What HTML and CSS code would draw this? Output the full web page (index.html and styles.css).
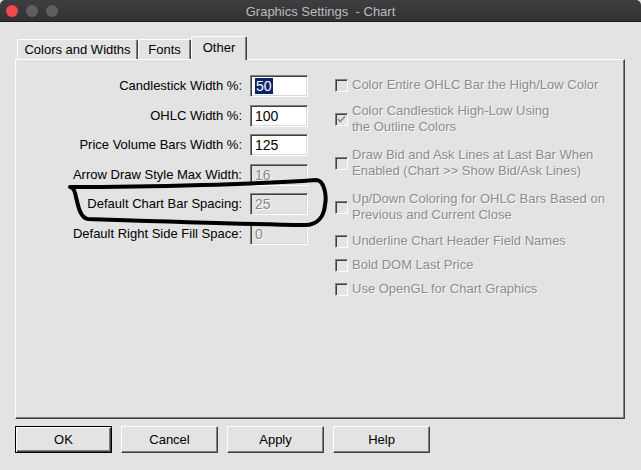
FILE: index.html
```html
<!DOCTYPE html>
<html lang="en">
<head>
    <meta charset="UTF-8">
    <meta name="viewport" content="width=device-width, initial-scale=1.0">
    <title>Graphics Settings - Chart</title>
    <link rel="stylesheet" href="styles.css">
</head>
<body>
<div class="window">
    <div class="titlebar">
        <div class="lights">
            <span class="light close"></span>
            <span class="light"></span>
            <span class="light"></span>
        </div>
        <div class="title">Graphics Settings &nbsp;- Chart</div>
    </div>

    <div class="main">
        <div class="tabs">
            <div class="tab tab-colors">Colors and Widths</div>
            <div class="tab tab-fonts">Fonts</div>
            <div class="tab tab-other active">Other</div>
        </div>

        <div class="panel">
            <div class="fields">
                <label>Candlestick Width %:</label>
                <div class="input"><span class="sel">50</span></div>

                <label>OHLC Width %:</label>
                <div class="input">100</div>

                <label>Price Volume Bars Width %:</label>
                <div class="input">125</div>

                <label>Arrow Draw Style Max Width:</label>
                <div class="input disabled">16</div>

                <label>Default Chart Bar Spacing:</label>
                <div class="input disabled">25</div>

                <label>Default Right Side Fill Space:</label>
                <div class="input disabled">0</div>
            </div>

            <div class="checks">
                <div class="check">
                    <span class="box"></span>
                    <span class="text">Color Entire OHLC Bar the High/Low Color</span>
                </div>
                <div class="check double">
                    <span class="box">
                        <svg width="11" height="11" viewBox="0 0 11 11"><path d="M2 5 L4 7.5 L9 2.5" fill="none" stroke="#8a8a8a" stroke-width="1.6"/></svg>
                    </span>
                    <span class="text">Color Candlestick High-Low Using<br>the Outline Colors</span>
                </div>
                <div class="check double">
                    <span class="box"></span>
                    <span class="text">Draw Bid and Ask Lines at Last Bar When<br>Enabled (Chart &gt;&gt; Show Bid/Ask Lines)</span>
                </div>
                <div class="check double">
                    <span class="box"></span>
                    <span class="text">Up/Down Coloring for OHLC Bars Based on<br>Previous and Current Close</span>
                </div>
                <div class="check">
                    <span class="box"></span>
                    <span class="text">Underline Chart Header Field Names</span>
                </div>
                <div class="check">
                    <span class="box"></span>
                    <span class="text">Bold DOM Last Price</span>
                </div>
                <div class="check">
                    <span class="box"></span>
                    <span class="text">Use OpenGL for Chart Graphics</span>
                </div>
            </div>
        </div>

        <div class="buttons">
            <button class="default">OK</button>
            <button>Cancel</button>
            <button>Apply</button>
            <button>Help</button>
        </div>
    </div>

    <!-- pen mark drawn around the bar spacing row -->
    <svg class="markup" width="641" height="470" viewBox="0 0 641 470">
        <path d="M70 187 C150 187 260 184 316 180 C324 180 327 195 325 205 C324 216 318 225 305 225 C240 224 150 221 88 219 C80 218 78 205 76 197 C75 192 74 189 72 188"
              fill="none" stroke="#000" stroke-width="4" stroke-linecap="round" stroke-linejoin="round"/>
    </svg>
</div>
</body>
</html>
```

FILE: styles.css
```css
body {
    margin: 0;
    background: #e3e3e3;
    font-family: "Liberation Sans", Arial, sans-serif;
    font-size: 13px;
    color: #000;
}
.window {
    position: relative;
    width: 641px;
    height: 470px;
    background: #e3e3e3;
    overflow: hidden;
    border-radius: 5px 5px 0 0;
}

/* title bar */
.titlebar {
    height: 21px;
    border-bottom: 1px solid #1c1c1e;
    background: linear-gradient(#3e3e40, #323234);
    display: flex;
    align-items: center;
    justify-content: center;
    position: relative;
}
.lights {
    position: absolute;
    left: 6px;
    top: 5px;
    display: flex;
    gap: 8px;
}
.light {
    width: 12px;
    height: 12px;
    border-radius: 50%;
    background: #5f5f61;
}
.light.close {
    background: #f4474a;
}
.title {
    color: #bdbdbd;
    font-size: 13px;
    padding-top: 1px;
}

.main {
    padding: 0 16px 0 15px;
}

/* tabs */
.tabs {
    display: flex;
    align-items: flex-end;
    margin-top: 14px;
    margin-left: 2px;
    height: 23px;
    position: relative;
    z-index: 1;
}
.tab {
    height: 19px;
    line-height: 19px;
    text-align: center;
    border-top: 1px solid #fff;
    border-left: 1px solid #fff;
    border-right: 1px solid #404040;
    box-shadow: inset -1px 0 0 #808080;
    border-radius: 2px 2px 0 0;
    box-sizing: content-box;
}
.tab-colors { width: 119px; }
.tab-fonts { width: 51px; }
.tab-other { width: 54px; }
.tab.active {
    height: 23px;
    line-height: 21px;
    margin-bottom: -1px;
    background: #e3e3e3;
}

/* panel */
.panel {
    height: 358px;
    border-top: 1px solid #fff;
    border-left: 1px solid #fff;
    border-right: 1px solid #404040;
    border-bottom: 1px solid #404040;
    box-shadow: inset -1px -1px 0 #808080;
    display: flex;
    gap: 27px;
}

.fields {
    width: 292px;
    padding-top: 15px;
    display: grid;
    grid-template-columns: 1fr 58px;
    grid-auto-rows: 22px;
    column-gap: 8px;
    row-gap: 7.6px;
    align-content: start;
}
.fields label {
    text-align: right;
    line-height: 22px;
}
.input {
    box-sizing: border-box;
    height: 22px;
    padding: 2px 0 0 4px;
    font-size: 14px;
    line-height: 17px;
    background: #fff;
    border: 1px solid;
    border-color: #808080 #fff #fff #808080;
    box-shadow: inset 1px 1px 0 #404040, inset -1px -1px 0 #d8d8d8;
}
.input.disabled {
    background: #e3e3e3;
    color: #8a8a8a;
    text-shadow: 1px 1px 0 #fff;
}
.sel {
    background: #0a246a;
    color: #fff;
    padding: 0 1px;
}

/* checkboxes */
.checks {
    padding-top: 13px;
    display: flex;
    flex-direction: column;
}
.check {
    height: 24px;
    display: flex;
    align-items: center;
    gap: 4px;
}
.check.double {
    height: 44px;
}
.box {
    box-sizing: border-box;
    width: 13px;
    height: 13px;
    flex: none;
    border: 1px solid;
    border-color: #808080 #fff #fff #808080;
    box-shadow: inset 1px 1px 0 #404040;
    display: flex;
    align-items: center;
    justify-content: center;
}
.text {
    color: #8c8c8c;
    line-height: 16px;
    white-space: nowrap;
    text-shadow: 1px 1px 0 rgba(255, 255, 255, 0.8);
}

/* buttons */
.buttons {
    margin-top: 7px;
    display: flex;
    gap: 9px;
}
button {
    width: 97px;
    height: 27px;
    font-family: "Liberation Sans", Arial, sans-serif;
    font-size: 13px;
    color: #000;
    background: #e3e3e3;
    border: 1px solid;
    border-color: #fff #404040 #404040 #fff;
    box-shadow: inset -1px -1px 0 #808080;
    padding: 0;
}
button.default {
    border: 1px solid #000;
    box-shadow: inset 1px 1px 0 #fff, inset -1px -1px 0 #404040, inset -2px -2px 0 #808080;
}

.markup {
    position: absolute;
    left: 0;
    top: 0;
    pointer-events: none;
}
```
